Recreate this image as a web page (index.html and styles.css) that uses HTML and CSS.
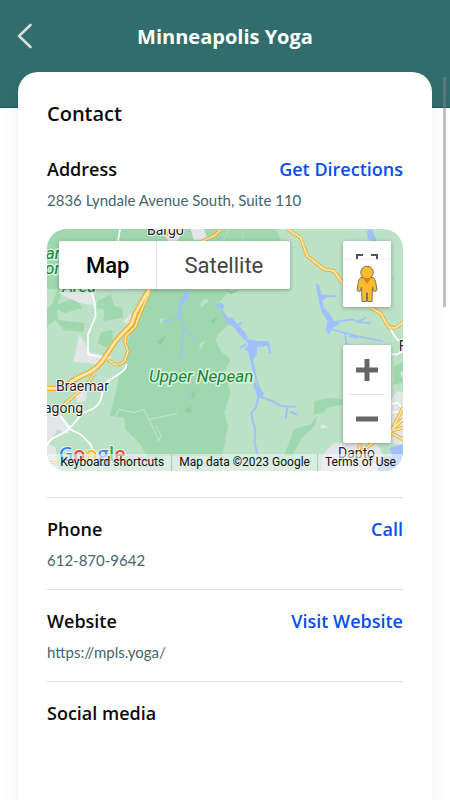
FILE: index.html
```html
<!DOCTYPE html>
<html lang="en">
<head>
<meta charset="utf-8">
<meta name="viewport" content="width=device-width, initial-scale=1">
<title>Minneapolis Yoga</title>
<link rel="stylesheet" href="styles.css">
</head>
<body>
<header class="topbar">
  <button class="back" type="button" aria-label="Back">
    <svg width="16" height="28" viewBox="0 0 16 28" fill="none" stroke="#d9dcda" stroke-width="2.6" stroke-linecap="round" stroke-linejoin="round"><path d="M13.500 3L2 14l11.500 11"/></svg>
  </button>
  <h1 class="title">Minneapolis Yoga</h1>
</header>
<main class="card">
  <h2 class="card-title">Contact</h2>

  <section class="entry entry-first">
    <div class="entry-head"><h3 class="label">Address</h3><a class="action" href="#directions">Get Directions</a></div>
    <p class="value">2836 Lyndale Avenue South, Suite 110</p>
    <div class="map">
      <svg class="map-art" viewBox="9 9 1068 726" preserveAspectRatio="xMidYMid slice" aria-hidden="true">
        <rect width="1100" height="760" fill="#bbe2c6"/>
        <g fill="#9fd7ae">
          <path d="M9 9H560L695 9 720 60 740 190 560 190 520 235 565 290 550 300 522 325 515 345 530 375 560 400 540 440 560 500 540 560 552 600 535 690H310L285 650 245 610 240 575 198 570 215 500 225 450 248 415 250 350 262 310 320 190H9Z"/>
          <path d="M9 190H60L40 235 95 215 115 245 60 262 40 250 42 282 122 292 118 318 60 312 35 282 9 300Z"/>
          <path d="M810 525L860 515 900 522 900 535 850 545 838 560 810 565Z"/>
          <path d="M800 595L820 570 812 600 775 635 745 690H720L750 610Z"/>
          <path d="M1050 420L1077 410V470L1050 475Z"/>
        </g>
        <g fill="#bbe2c6">
          <path d="M158 190H262L272 225 245 255 235 300 190 345 140 340 152 260 138 225Z"/>
          <path d="M9 190H40L25 235 9 250Z"/>
          <path d="M470 230L485 215 495 225 470 245Z"/>
          <path d="M345 280L362 275 350 295Z"/>
          <path d="M470 350L485 345 465 375Z"/>
        </g>
        <g fill="#9fd7ae">
          <path d="M160 225L200 205 210 240 236 245 238 275 178 285 182 252 158 245Z"/>
          <path d="M172 318L205 312 205 345 188 365 160 350Z"/>
        </g>
        <g fill="#8fce9f"><path d="M340 345L365 330 350 360ZM500 285L520 272 510 295ZM440 505L455 490 450 520ZM420 555L440 540 442 562ZM545 195L590 192 560 205Z"/></g>
        <g fill="#e2e6e8">
          <path d="M50 205L100 180 150 195 155 240 105 230Z"/>
          <path d="M106 325L140 380 200 395 165 415 88 408Z"/>
          <path d="M235 290L262 260 258 290Z"/>
          <path d="M90 485L130 490 125 525 100 530Z"/>
          <path d="M9 560L50 565 80 600 70 625 40 610 20 650H9Z"/>
          <path d="M345 9H420L400 45H375Z"/>
          <path d="M440 9H480L490 40 450 42Z"/>
          <path d="M9 650L35 665 40 735H9Z"/>
          <path d="M832 595L855 603 830 608Z"/>
          <path d="M1040 520L1060 495 1077 500V660L1045 650Z"/>
          <path d="M840 680L870 650 1000 655 1020 690 1000 735H830Z"/>
          <path d="M1068 440L1077 435V460Z"/>
        </g>
        <g fill="#9fc0fb">
          <path d="M1037 665L1077 655V735H1000L1010 700 1045 690Z"/>
          <path d="M970 10L985 12 1000 48H985L970 35Z"/>
          <path d="M512 238L530 230 542 238 536 252 550 275 565 275 585 300 605 320 612 340 640 345 672 345 678 358 660 360 640 365 638 385 628 400 632 440 626 440 618 400 612 375 600 372 615 355 590 330 572 305 548 290 535 265 530 245Z"/>
          <path d="M815 172L825 178 832 205 855 210 835 222 840 245 858 265 870 285 890 290 875 300 862 310 855 328 845 310 850 285 832 255 825 230Z"/>
          <path d="M428 195L436 195 430 220 412 240 412 268 408 280 400 275 406 245 408 220Z"/>
          <path d="M632 465L642 485 660 500 655 520 640 510 628 480Z"/>
        </g>
        <g fill="none" stroke="#9fc0fb" stroke-width="6" stroke-linejoin="round" stroke-linecap="round">
          <path d="M408 272L385 282 360 287M408 275L422 300 415 325 412 390M424 312L438 325 450 340" stroke-width="4"/>
          <path d="M405 390L410 402M432 490V520" stroke-width="3"/>
          <path d="M605 355L590 365M660 358L672 352 678 380M575 300L590 292M630 420L636 460 650 495 642 515 636 545 622 560 625 580 634 610 632 650 640 685"/>
          <path d="M655 515L685 525 710 540 755 542M730 545L725 575M740 558L758 565M620 345L640 352 665 350"/>
          <path d="M840 210L876 211M868 288L925 280 940 287 978 292M945 285L965 275M862 310L900 320 945 332 1015 345M903 325L908 355M915 330L940 335" stroke-width="5"/>
          <path d="M1040 165L1050 155" stroke-width="3"/>
        </g>
        <g fill="none" stroke="#fff" stroke-width="5" stroke-linejoin="round">
          <path d="M228 9L222 45M140 190L152 230 155 270 132 325V385L200 398M248 415C245 445 190 455 178 480 175 510 172 545 130 555 105 565 95 590 78 605 50 635 15 630 9 660M50 570L78 610 110 625 140 655 150 685M1040 308C1050 335 1065 345 1077 355M1040 385H1060L1077 375M1042 535L1060 530 1077 548M1045 560L1077 555"/>
          <path d="M213 575L225 550 270 560 300 550 320 590 345 645 350 625 335 600M318 580L400 562" stroke="#c8e6cb" stroke-width="3"/>
          <path d="M556 9L535 50M596 9V45" stroke="#b5ddd0" stroke-width="3"/>
        </g>
        <g fill="none" stroke-linejoin="round">
          <g stroke="#f0a92a">
            <path d="M315 190L275 260 262 295 215 345 175 405C150 440 115 445 85 465L55 487H9" stroke-width="16"/>
            <path d="M318 195L285 270 275 300 245 330 243 350 252 375 242 405C215 430 205 405 190 400M150 445L125 480 55 540M375 30L370 9M530 12L510 30 475 45" stroke-width="10"/>
            <path d="M730 9L770 35 790 90 840 130 870 135 895 170M980 245L1010 262 1035 305H1055L1077 290" stroke-width="11"/>
            <path d="M1077 545L1040 620 1077 640M1077 580L1042 612 960 670 920 690M950 650L940 690M1077 605L1040 615 990 645" stroke-width="11"/>
            <path d="M9 710H40" stroke-width="9"/>
          </g>
          <g stroke="#fde7a6">
            <path d="M315 190L275 260 262 295 215 345 175 405C150 440 115 445 85 465L55 487H9" stroke-width="9"/>
            <path d="M318 195L285 270 275 300 245 330 243 350 252 375 242 405C215 430 205 405 190 400M150 445L125 480 55 540M375 30L370 9M530 12L510 30 475 45" stroke-width="5"/>
            <path d="M730 9L770 35 790 90 840 130 870 135 895 170M980 245L1010 262 1035 305H1055L1077 290" stroke-width="6"/>
            <path d="M1077 545L1040 620 1077 640M1077 580L1042 612 960 670 920 690M950 650L940 690M1077 605L1040 615 990 645" stroke-width="6"/>
            <path d="M9 710H40" stroke-width="4"/>
          </g>
        </g>
        <g class="place">
          <text x="309" y="27">Bargo</text>
          <text x="36" y="496">Braemar</text>
          <text x="0" y="561">agong</text>
          <text x="882" y="697">Dapto</text>
          <text x="1064" y="376">F</text>
        </g>
        <g class="park">
          <text x="315" y="469">Upper Nepean</text>
          <text x="5" y="98">ar</text>
          <text x="3" y="145">on</text>
          <text x="55" y="199">Area</text>
        </g>
        <text class="brand" x="44" y="704"><tspan fill="#4285f4">G</tspan><tspan fill="#ea4335">o</tspan><tspan fill="#fbbc04">o</tspan><tspan fill="#4285f4">g</tspan><tspan fill="#34a853">l</tspan><tspan fill="#ea4335">e</tspan></text>
      </svg>
      <div class="map-ui">
        <div class="map-types">
          <button class="map-type map-type-on" type="button">Map</button>
          <button class="map-type" type="button">Satellite</button>
        </div>
        <div class="map-tools">
          <div class="tool-box view-tools">
            <button class="tool fullscreen" type="button" aria-label="Toggle fullscreen view">
              <svg width="22" height="5" viewBox="0 0 22 5" fill="none" stroke="#555" stroke-width="2"><path d="M1 5V1h6M15 1h6v4"/></svg>
            </button>
            <button class="tool pegman" type="button" aria-label="Street View">
              <svg width="22" height="38" viewBox="0 0 22 38"><g fill="#fbbc2d" stroke="#77736a" stroke-width="1" stroke-linejoin="round"><path d="M6 12.500h10c2 0 3 1.500 3.500 4L21 25l-2 1.500-1.500-.5L16.500 22 16 36.500h-4.500V28h-1v8.500H6L5.500 22 4.500 26 3 26.500 1 25l1.500-8.500c.5-2.500 1.500-4 3.500-4z"/><circle cx="11" cy="7.500" r="6.300"/></g><path d="M7 13.200h8L11 19z" fill="#e08326"/></svg>
            </button>
          </div>
          <div class="tool-box zoom-tools">
            <button class="tool zoom" type="button" aria-label="Zoom in">
              <svg width="22" height="22" viewBox="0 0 22 22" fill="#666"><path d="M8.500 0h5v8.500H22v5h-8.500V22h-5v-8.500H0v-5h8.500z"/></svg>
            </button>
            <button class="tool zoom" type="button" aria-label="Zoom out">
              <svg width="22" height="22" viewBox="0 0 22 22" fill="#666"><path d="M0 8.500h22v5H0z"/></svg>
            </button>
          </div>
        </div>
      </div>
      <div class="credits">
        <button class="credit" type="button">Keyboard shortcuts</button>
        <span class="credit">Map data ©2023 Google</span>
        <a class="credit" href="#terms">Terms of Use</a>
      </div>
    </div>
  </section>

  <section class="entry">
    <div class="entry-head"><h3 class="label">Phone</h3><a class="action" href="tel:6128709642">Call</a></div>
    <p class="value">612-870-9642</p>
  </section>
  <section class="entry">
    <div class="entry-head"><h3 class="label">Website</h3><a class="action" href="https://mpls.yoga/">Visit Website</a></div>
    <p class="value">https://mpls.yoga/</p>
  </section>
  <section class="entry">
    <div class="entry-head"><h3 class="label">Social media</h3></div>
  </section>
</main>
<div class="scroll-thumb"></div>
</body>
</html>
```
FILE: styles.css
```css
* { box-sizing: border-box; }
body {
  margin: 0;
  min-height: 100vh;
  display: flex;
  flex-direction: column;
  background: #fff;
  color: #0b0b0b;
  font-family: "Open Sans", "Noto Sans", sans-serif;
  overflow: hidden;
}
h1, h2, h3, p { margin: 0; }
button {
  margin: 0;
  padding: 0;
  border: 0;
  background: none;
  color: inherit;
  font: inherit;
}
a { text-decoration: none; }
svg { display: block; }

.topbar {
  display: grid;
  grid-template-columns: 48px 1fr 48px;
  align-items: center;
  height: 108px;
  padding-bottom: 36px;
  background: #316d6c;
  border-bottom: 1px solid #125f5d;
}
.back { justify-self: start; padding-left: 17px; }
.title {
  padding-top: 2px;
  color: #fff;
  font-size: 20px;
  line-height: 28px;
  font-weight: 700;
  text-align: center;
}

.card {
  flex: 1;
  margin: -36px 18px 0;
  padding: 28px 29px 0;
  background: #fff;
  border-radius: 20px 20px 0 0;
  box-shadow: 0 12px 18px rgba(0, 0, 0, 0.07);
}
.card-title { font-size: 20px; line-height: 28px; font-weight: 600; }
.entry { padding: 17px 0 18px; border-top: 1px solid #dedede; }
.entry-first { padding: 27px 0 26px; border-top: 0; }
.entry-head { display: flex; justify-content: space-between; }
.label, .action { font-size: 18px; line-height: 28px; font-weight: 600; }
.action { color: #0550f0; }
.value {
  margin-top: 6px;
  color: #44666e;
  font-family: Lato, "Open Sans", sans-serif;
  font-size: 15px;
  line-height: 22px;
}

.map {
  position: relative;
  display: flex;
  flex-direction: column;
  justify-content: space-between;
  height: 242px;
  margin-top: 18px;
  border-radius: 20px;
  overflow: hidden;
  font-family: Roboto, sans-serif;
}
.map-art { position: absolute; inset: 0; width: 100%; height: 100%; }
.place { font-size: 42px; fill: #222; stroke: #fff; stroke-width: 5px; paint-order: stroke; }
.park {
  font-size: 51px;
  font-style: italic;
  fill: #138536;
  stroke: #d9f2df;
  stroke-width: 9px;
  paint-order: stroke;
}
.brand {
  font-family: "Open Sans", sans-serif;
  font-size: 60px;
  font-weight: 600;
  stroke: #fff;
  stroke-width: 4px;
  paint-order: stroke;
}
.map-ui {
  position: relative;
  display: flex;
  justify-content: space-between;
  align-items: flex-start;
  padding: 12px;
}
.map-types {
  display: flex;
  background: #fff;
  border-radius: 2px;
  box-shadow: 0 1px 4px rgba(0, 0, 0, 0.3);
}
.map-type { height: 48px; padding: 0 27px; color: #444; font-size: 22px; }
.map-type-on { color: #000; font-weight: 500; border-right: 1px solid #e6e6e6; }
.map-tools { display: flex; flex-direction: column; gap: 38px; }
.tool-box {
  display: flex;
  flex-direction: column;
  width: 48px;
  background: #fff;
  border-radius: 2px;
  box-shadow: 0 1px 4px rgba(0, 0, 0, 0.3);
}
.tool { display: flex; justify-content: center; align-items: center; }
.fullscreen { height: 18px; align-items: flex-end; }
.pegman { height: 48px; border-top: 1px solid #eee; }
.zoom { height: 49px; margin: 0 6px; }
.zoom + .zoom { border-top: 1px solid #e6e6e6; }
.credits {
  position: absolute;
  right: 0;
  bottom: 0;
  display: flex;
  width: 100%;
  justify-content: flex-end;
  background: rgba(245, 245, 245, 0.55);
}
.credit {
  padding: 0 7px;
  color: #111;
  font-size: 12px;
  line-height: 17px;
  white-space: nowrap;
}
.credit + .credit { border-left: 1px solid #a9cdb3; }

.scroll-thumb {
  position: absolute;
  top: 77px;
  right: 4px;
  width: 3px;
  height: 230px;
  background: rgba(130, 130, 140, 0.5);
}
```
